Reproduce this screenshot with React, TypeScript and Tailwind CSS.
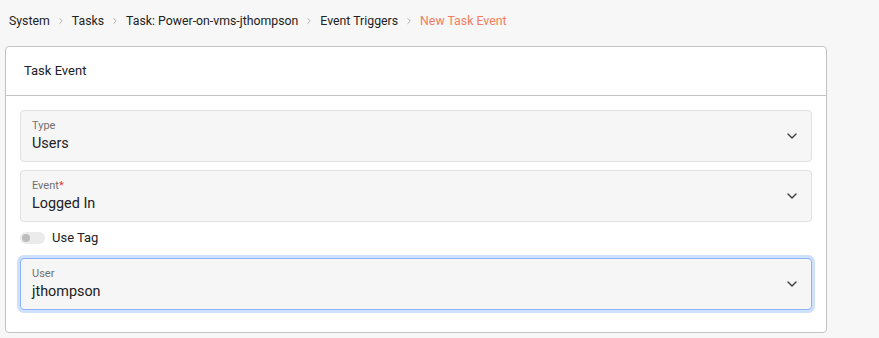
import { ChevronDown, ChevronRight } from 'lucide-react';

const crumbs = ['System', 'Tasks', 'Task: Power-on-vms-jthompson', 'Event Triggers'];

function SelectField({
  label,
  value,
  required,
  focused,
}: {
  label: string;
  value: string;
  required?: boolean;
  focused?: boolean;
}) {
  return (
    <div
      className={
        focused
          ? 'flex h-[52px] items-center justify-between rounded-[4px] border border-[#8ab4f8] bg-[#f6f6f6] pl-[11px] pr-[11px] shadow-[0_0_0_3px_#cfe0fc]'
          : 'flex h-[52px] items-center justify-between rounded-[4px] border border-[#e1e1e4] bg-[#f6f6f6] pl-[11px] pr-[11px]'
      }
    >
      <div className="flex flex-col">
        <span className="text-[11px] leading-[14px] text-[#707070]">
          {label}
          {required && <span className="text-[#e53935]">*</span>}
        </span>
        <span className="mt-[2px] text-[14.4px] leading-[18px] text-[#202124]">{value}</span>
      </div>
      <ChevronDown className="h-[16px] w-[16px] text-[#3c3c3c]" strokeWidth={2} />
    </div>
  );
}

export default function App() {
  return (
    <div className="min-h-[338px] w-[879px] bg-[#f7f7f7] font-['Roboto',sans-serif]">
      <nav className="flex h-[42px] items-center pl-[9px] text-[12.3px] text-[#222]">
        {crumbs.map((c) => (
          <span key={c} className="flex items-center">
            <span>{c}</span>
            <ChevronRight className="mx-[6px] h-[10px] w-[10px] text-[#a0a0a0]" strokeWidth={2} />
          </span>
        ))}
        <span className="text-[#f47c5c]">New Task Event</span>
      </nav>
      <div className="mb-[5px] ml-[5px] mt-[4px] w-[822px] rounded-[4px] border border-[#c4c4c4] bg-white">
        <div className="flex h-[49px] items-center border-b border-[#c4c4c4] pl-[18px] text-[13px] text-[#202124]">
          Task Event
        </div>
        <div className="flex flex-col px-[14px] pb-[22px] pt-[14px]">
          <SelectField label="Type" value="Users" />
          <div className="mt-[8px]">
            <SelectField label="Event" value="Logged In" required />
          </div>
          <div className="mt-[9px] flex h-[14px] items-center">
            <span className="relative h-[12px] w-[25px] rounded-full bg-[#ebebeb]">
              <span className="absolute left-[2px] top-[2px] h-[8px] w-[8px] rounded-full bg-[#bdbdbd]" />
            </span>
            <span className="ml-[7px] text-[13px] text-[#202124]">Use Tag</span>
          </div>
          <div className="mt-[13px]">
            <SelectField label="User" value="jthompson" focused />
          </div>
        </div>
      </div>
    </div>
  );
}
